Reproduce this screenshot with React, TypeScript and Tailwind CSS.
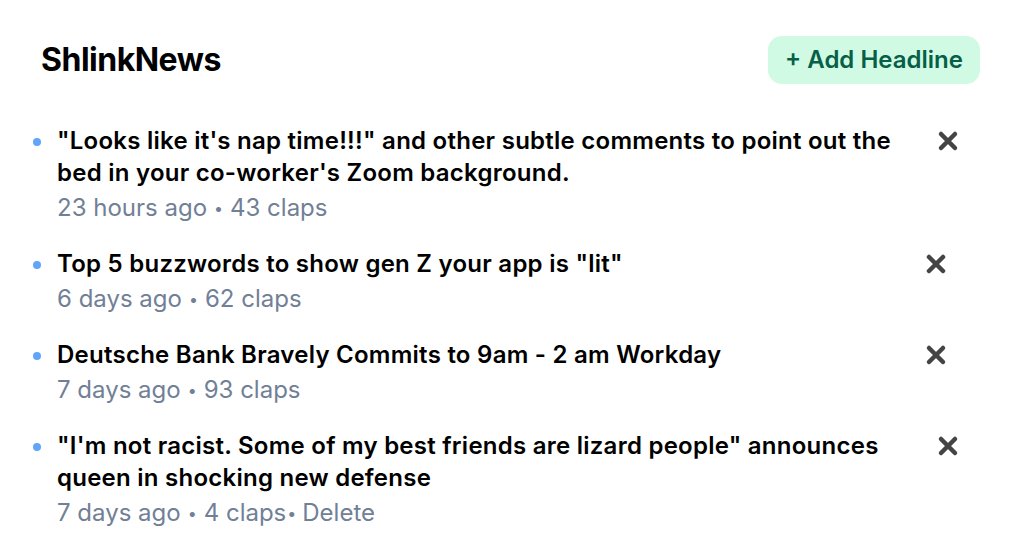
import React from "react";

type Headline = {
  id: number;
  title: string;
  age: string;
  claps: number;
  deletable?: boolean;
  wide?: boolean;
};

const headlines: Headline[] = [
  {
    id: 1,
    title:
      "\"Looks like it's nap time!!!\" and other subtle comments to point out the bed in your co-worker's Zoom background.",
    age: "23 hours ago",
    claps: 43,
    wide: true,
  },
  { id: 2, title: "Top 5 buzzwords to show gen Z your app is \"lit\"", age: "6 days ago", claps: 62 },
  { id: 3, title: "Deutsche Bank Bravely Commits to 9am - 2 am Workday", age: "7 days ago", claps: 93 },
  {
    id: 4,
    title:
      "\"I'm not racist. Some of my best friends are lizard people\" announces queen in shocking new defense",
    age: "7 days ago",
    claps: 4,
    deletable: true,
    wide: true,
  },
];

const CloseIcon = () => (
  <svg width="22" height="22" viewBox="0 0 22 22" className="text-[#444444]">
    <path d="M4 4 L18 18 M18 4 L4 18" stroke="currentColor" strokeWidth="4.5" strokeLinecap="round" />
  </svg>
);

const Dot = () => <span className="mx-[7px] text-[16px] align-[2px]">•</span>;

export default function App() {
  return (
    <div className="min-h-screen bg-white font-['Inter',sans-serif] text-black">
      <div className="flex items-center justify-between pl-[41px] pr-[36px] pt-[36px]">
        <h1 className="text-[32px] font-bold leading-[40px] tracking-[-0.5px]">ShlinkNews</h1>
        <button className="h-[48px] w-[212px] rounded-[14px] bg-[#d1fae5] text-[24px] font-semibold text-[#065f46]">
          + Add Headline
        </button>
      </div>

      <ul className="mt-[41px] flex flex-col gap-[24px] pl-[33px]">
        {headlines.map((h) => (
          <li key={h.id} className="flex items-start">
            <span className="mt-[13px] h-[8px] w-[8px] shrink-0 rounded-full bg-[#60a5fa]" />
            <div className="ml-[16px] w-[850px]">
              <p className="text-[24px] font-semibold leading-[32px] tracking-[0.25px]">{h.title}</p>
              <p className="mt-[3px] text-[24px] leading-[32px] text-[#718096]">
                {h.age}
                <Dot />
                {h.claps} claps
                {h.deletable && (
                  <>
                    <span className="ml-[1px] mr-[6px] text-[16px] align-[2px]">•</span>Delete
                  </>
                )}
              </p>
            </div>
            <button className={h.wide ? "mt-[5px] ml-[30px]" : "mt-[5px] ml-[18px]"}>
              <CloseIcon />
            </button>
          </li>
        ))}
      </ul>
    </div>
  );
}
